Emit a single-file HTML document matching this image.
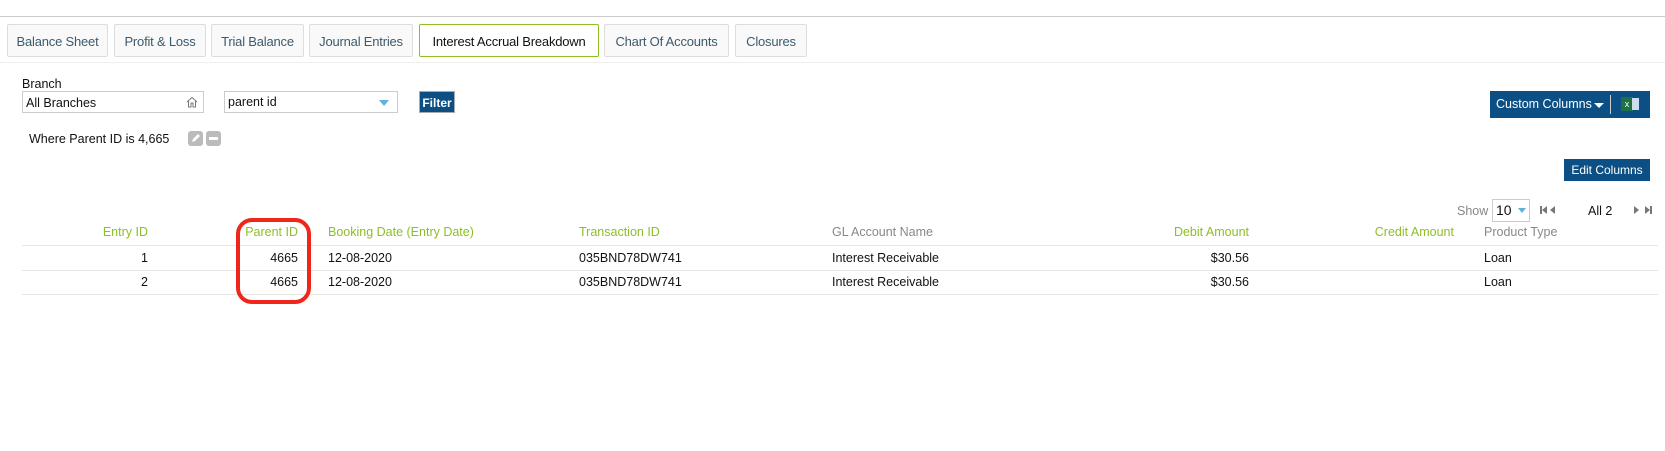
<!DOCTYPE html><html><head><style>
body{margin:0;width:1665px;height:451px;background:#fff;font-family:"Liberation Sans",sans-serif;font-size:12.5px;color:#111;position:relative;overflow:hidden}
.a{position:absolute}
.tab{position:absolute;top:24px;height:33px;border:1px solid #ddd;background:#f9f9f9;color:#3d5a6c;line-height:33px;text-align:center;box-sizing:border-box;font-size:13px;border-radius:2px;letter-spacing:-0.2px}
.g{color:#8cbf26}.gr{color:#888}
.r{text-align:right}
.line{position:absolute;left:22px;width:1636px;height:1px;background:#e6e6e6}
</style></head><body>
<div class="a" style="left:0;top:16px;width:1665px;height:1px;background:#ccc"></div>
<div class="tab" style="left:7px;width:101px">Balance Sheet</div>
<div class="tab" style="left:114px;width:92px">Profit &amp; Loss</div>
<div class="tab" style="left:211px;width:93px">Trial Balance</div>
<div class="tab" style="left:309px;width:104px">Journal Entries</div>
<div class="tab" style="left:419px;width:180px;background:#fff;border-color:#8cbf26;color:#111">Interest Accrual Breakdown</div>
<div class="tab" style="left:604px;width:125px">Chart Of Accounts</div>
<div class="tab" style="left:735px;width:72px">Closures</div>
<div class="a" style="left:0;top:62px;width:1665px;height:1px;background:#eee"></div>
<div class="a" style="left:22px;top:77px">Branch</div>
<div class="a" style="left:22px;top:91px;width:182px;height:22px;border:1px solid #ccc;box-sizing:border-box;line-height:22px;padding-left:3px">All Branches
<svg class="a" style="right:4px;top:3px" width="14" height="14" viewBox="0 0 14 14"><path d="M2 7L7 2.5L12 7M3.5 6v6h2.5v-4h2v4h2.5V6" fill="none" stroke="#777" stroke-width="1"/></svg></div>
<div class="a" style="left:224px;top:91px;width:174px;height:22px;border:1px solid #ccc;box-sizing:border-box;line-height:20px;padding-left:3px">parent id
<div class="a" style="right:8px;top:8px;border-left:5px solid transparent;border-right:5px solid transparent;border-top:6px solid #5fb2dd"></div></div>
<div class="a" style="left:419px;top:91px;width:36px;height:22px;background:#0b4f84;color:#fff;text-align:center;line-height:22px;font-size:12px;border:1px solid #aaa;box-sizing:border-box;font-weight:bold">Filter</div>
<div class="a" style="left:29px;top:132px">Where Parent ID is 4,665</div>
<div class="a" style="left:188px;top:131px;width:15px;height:15px;background:#bbb;border-radius:3px"><svg width="15" height="15"><path d="M4 11l1-3 5-5 2 2-5 5z" fill="#fff"/></svg></div>
<div class="a" style="left:206px;top:131px;width:15px;height:15px;background:#bbb;border-radius:3px"><div class="a" style="left:3px;top:6px;width:9px;height:3px;background:#fff"></div></div>
<div class="a" style="left:1490px;top:91px;width:160px;height:27px;background:#0b4f84;color:#fff;line-height:27px;font-size:12.5px"><span style="margin-left:6px">Custom Columns</span>
<span class="a" style="left:104px;top:12px;border-left:5px solid transparent;border-right:5px solid transparent;border-top:5px solid #fff"></span>
<span class="a" style="left:120px;top:4px;width:1px;height:19px;background:#ccc"></span>
<span class="a" style="left:131px;top:6px;width:12px;height:14px;background:#1e7145;color:#fff;font-size:9px;line-height:14px;text-align:center">x</span><span class="a" style="left:142px;top:7px;width:7px;height:12px;background:#cde"></span></div>
<div class="a" style="left:1564px;top:159px;width:86px;height:22px;background:#0b4f84;color:#fff;text-align:center;line-height:22px;font-size:12px">Edit Columns</div>
<div class="a gr" style="left:1457px;top:204px">Show</div>
<div class="a" style="left:1492px;top:199px;width:38px;height:23px;border:1px solid #ccc;box-sizing:border-box;line-height:21px;padding-left:3px;font-size:14px">10<span class="a" style="right:3px;top:8px;border-left:4px solid transparent;border-right:4px solid transparent;border-top:5px solid #5fb2dd"></span></div>
<svg class="a" style="left:1540px;top:205px" width="22" height="10"><rect x="0" y="1" width="2" height="8" fill="#777"/><path d="M2 5l5-4v8zM10 5l5-4v8z" fill="#777"/></svg>
<div class="a" style="left:1588px;top:204px">All 2</div>
<svg class="a" style="left:1634px;top:205px" width="22" height="10"><path d="M0 1l5 4-5 4zM11 1l5 4-5 4z" fill="#777"/><rect x="16" y="1" width="2" height="8" fill="#777"/></svg>
<div class="a g r" style="left:48px;width:100px;top:225px">Entry ID</div>
<div class="a g r" style="left:198px;width:100px;top:225px">Parent ID</div>
<div class="a g" style="left:328px;top:225px">Booking Date (Entry Date)</div>
<div class="a g" style="left:579px;top:225px">Transaction ID</div>
<div class="a gr" style="left:832px;top:225px">GL Account Name</div>
<div class="a g r" style="left:1100px;width:149px;top:225px">Debit Amount</div>
<div class="a g r" style="left:1300px;width:154px;top:225px">Credit Amount</div>
<div class="a gr" style="left:1484px;top:225px">Product Type</div>
<div class="line" style="top:245px"></div>
<div class="line" style="top:270px"></div>
<div class="line" style="top:294px"></div>
<div class="a r" style="left:48px;width:100px;top:251px">1</div>
<div class="a r" style="left:198px;width:100px;top:251px">4665</div>
<div class="a" style="left:328px;top:251px">12-08-2020</div>
<div class="a" style="left:579px;top:251px">035BND78DW741</div>
<div class="a" style="left:832px;top:251px">Interest Receivable</div>
<div class="a r" style="left:1100px;width:149px;top:251px">$30.56</div>
<div class="a" style="left:1484px;top:251px">Loan</div>
<div class="a r" style="left:48px;width:100px;top:275px">2</div>
<div class="a r" style="left:198px;width:100px;top:275px">4665</div>
<div class="a" style="left:328px;top:275px">12-08-2020</div>
<div class="a" style="left:579px;top:275px">035BND78DW741</div>
<div class="a" style="left:832px;top:275px">Interest Receivable</div>
<div class="a r" style="left:1100px;width:149px;top:275px">$30.56</div>
<div class="a" style="left:1484px;top:275px">Loan</div>
<div class="a" style="left:236px;top:218px;width:75px;height:86px;border:4px solid #f0261b;border-radius:16px;box-sizing:border-box"></div>
</body></html>
